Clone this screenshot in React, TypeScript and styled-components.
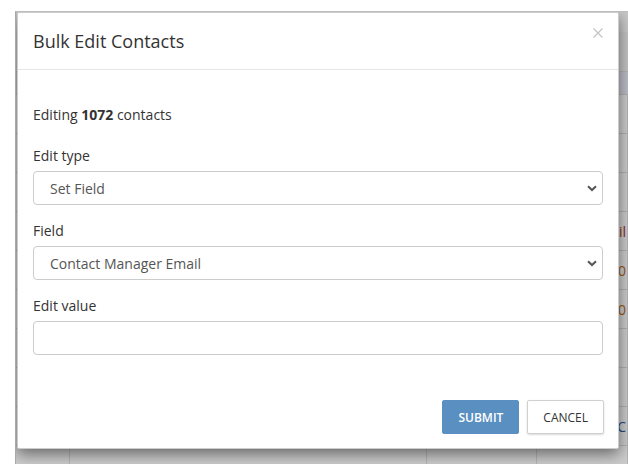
import React from 'react';
import styled, { createGlobalStyle } from 'styled-components';

const GlobalStyle = createGlobalStyle`
  html, body {
    margin: 0;
    padding: 0;
    background: #fff;
  }
  body {
    font-family: "Open Sans", "Liberation Sans", sans-serif;
    font-size: 14px;
    color: #333;
  }
  * { box-sizing: border-box; }
`;

// page behind the dialog
const Stage = styled.div`
  position: relative;
  margin: 11px 0 0 15px;
  height: 453px;
  overflow: hidden;
  background: #fff;
  border-top: 1px solid #bdbdbd;
  border-left: 1px solid #a8a8a8;
`;

const Toolbar = styled.div`
  height: 20px;
  background: #fcfcfc;
`;

const SubBar = styled.div`
  height: 40px;
  background: #f6f6f6;
  border-bottom: 1px solid #e2e2e2;
`;

const HeadRow = styled.div`
  height: 23px;
  background: #eceef8;
  border-bottom: 1px solid #dcdcdc;
`;

const Row = styled.div`
  display: grid;
  grid-template-columns: 54px 357px 110px 1fr;
  height: 39px;
  border-bottom: 1px solid #dedede;
`;

const Cell = styled.div<{ $color?: string; $end?: boolean }>`
  display: flex;
  align-items: center;
  justify-content: ${(p) => (p.$end ? 'flex-end' : 'flex-start')};
  padding: 0 1px 0 6px;
  border-right: 1px solid #e4e4e4;
  white-space: nowrap;
  overflow: hidden;
  font-size: 14px;
  color: ${(p) => p.$color || '#333'};
`;

const Backdrop = styled.div`
  position: absolute;
  inset: 0;
  background: rgba(0, 0, 0, 0.2);
`;

// dialog
const Dialog = styled.div`
  position: absolute;
  top: 0;
  left: 1px;
  width: 602px;
  background: #fff;
  border: 1px solid rgba(0, 0, 0, 0.2);
  border-radius: 2px;
  box-shadow: 0 5px 15px rgba(0, 0, 0, 0.5);
`;

const Header = styled.div`
  display: flex;
  align-items: flex-start;
  justify-content: space-between;
  padding: 15px;
  border-bottom: 1px solid #e5e5e5;
`;

const Title = styled.h4`
  margin: 0;
  font-size: 18px;
  font-weight: 400;
  line-height: 26px;
  color: #333;
`;

const Close = styled.button`
  border: 0;
  background: none;
  padding: 0;
  margin: 0;
  width: 10px;
  height: 10px;
  cursor: pointer;
  display: flex;
`;

const Body = styled.div`
  padding: 15px;
`;

const Intro = styled.p`
  margin: 20px 0 21px;
  line-height: 20px;
`;

const Group = styled.div`
  margin-bottom: 16px;

  &:last-child {
    margin-bottom: 15px;
  }
`;

const Label = styled.label`
  display: block;
  margin-bottom: 5px;
  line-height: 20px;
  font-weight: 400;
  color: #333;
`;

const SelectWrap = styled.div`
  position: relative;
`;

const Select = styled.select`
  appearance: none;
  display: block;
  width: 100%;
  height: 34px;
  padding: 0 30px 0 16px;
  border: 1px solid #ccc;
  border-radius: 4px;
  background: #fff;
  font: inherit;
  font-size: 14px;
  color: #555;
`;

const Chevron = styled.svg`
  position: absolute;
  right: 6px;
  top: 14px;
  pointer-events: none;
`;

const Input = styled.input`
  display: block;
  width: 100%;
  height: 34px;
  padding: 0 12px;
  border: 1px solid #ccc;
  border-radius: 4px;
  font: inherit;
  color: #555;
`;

const Footer = styled.div`
  display: flex;
  justify-content: flex-end;
  gap: 8px;
  padding: 15px 14px 14px 15px;
`;

const Button = styled.button<{ $primary?: boolean }>`
  height: 34px;
  padding: 0 15px;
  border-radius: 2px;
  font-family: "Open Sans", "Liberation Sans", sans-serif;
  font-size: 12px;
  font-weight: ${(p) => (p.$primary ? 600 : 400)};
  text-transform: uppercase;
  cursor: pointer;
  color: ${(p) => (p.$primary ? '#fff' : '#333')};
  background: ${(p) => (p.$primary ? '#5a8fc1' : '#fff')};
  border: 1px solid ${(p) => (p.$primary ? '#5a8fc1' : '#d0d0d0')};
  box-shadow: ${(p) => (p.$primary ? 'none' : '0 1px 2px rgba(0,0,0,0.15)')};
`;

const rows = [
  { a: '', d: '' },
  { a: '', d: '' },
  { a: '', d: '' },
  { a: 'r', d: 'Email', color: '#b03030' },
  { a: '', d: '2020 0', color: '#c07020' },
  { a: '', d: '2020 0', color: '#c07020' },
  { a: '', d: '' },
  { a: '', d: '' },
  { a: 'r', d: '2022 C', color: '#3060a0' },
  { a: '', d: '' },
];

const ChevronIcon = () => (
  <Chevron width="10" height="7" viewBox="0 0 10 7">
    <path d="M1 1.2 L5 5 L9 1.2" fill="none" stroke="#555" strokeWidth="2" />
  </Chevron>
);

export default function App() {
  return (
    <>
      <GlobalStyle />
      <Stage>
        <Toolbar />
        <SubBar />
        <HeadRow />
        {rows.map((r, i) => (
          <Row key={i}>
            <Cell $color="#3060a0">{r.a}</Cell>
            <Cell />
            <Cell />
            <Cell $color={r.color} $end>{r.d}</Cell>
          </Row>
        ))}
        <Backdrop />
        <Dialog role="dialog">
          <Header>
            <Title>Bulk Edit Contacts</Title>
            <Close aria-label="Close">
              <svg width="10" height="10" viewBox="0 0 10 10">
                <path d="M0.5 0.5 L9.5 9.5 M9.5 0.5 L0.5 9.5" stroke="#c4c4c4" strokeWidth="1.2" fill="none" />
              </svg>
            </Close>
          </Header>
          <Body>
            <Intro>
              Editing <b>1072</b> contacts
            </Intro>
            <Group>
              <Label>Edit type</Label>
              <SelectWrap>
                <Select defaultValue="set">
                  <option value="set">Set Field</option>
                  <option value="clear">Clear Field</option>
                </Select>
                <ChevronIcon />
              </SelectWrap>
            </Group>
            <Group>
              <Label>Field</Label>
              <SelectWrap>
                <Select defaultValue="cme">
                  <option value="cme">Contact Manager Email</option>
                </Select>
                <ChevronIcon />
              </SelectWrap>
            </Group>
            <Group>
              <Label>Edit value</Label>
              <Input type="text" />
            </Group>
          </Body>
          <Footer>
            <Button $primary>Submit</Button>
            <Button>Cancel</Button>
          </Footer>
        </Dialog>
      </Stage>
    </>
  );
}
